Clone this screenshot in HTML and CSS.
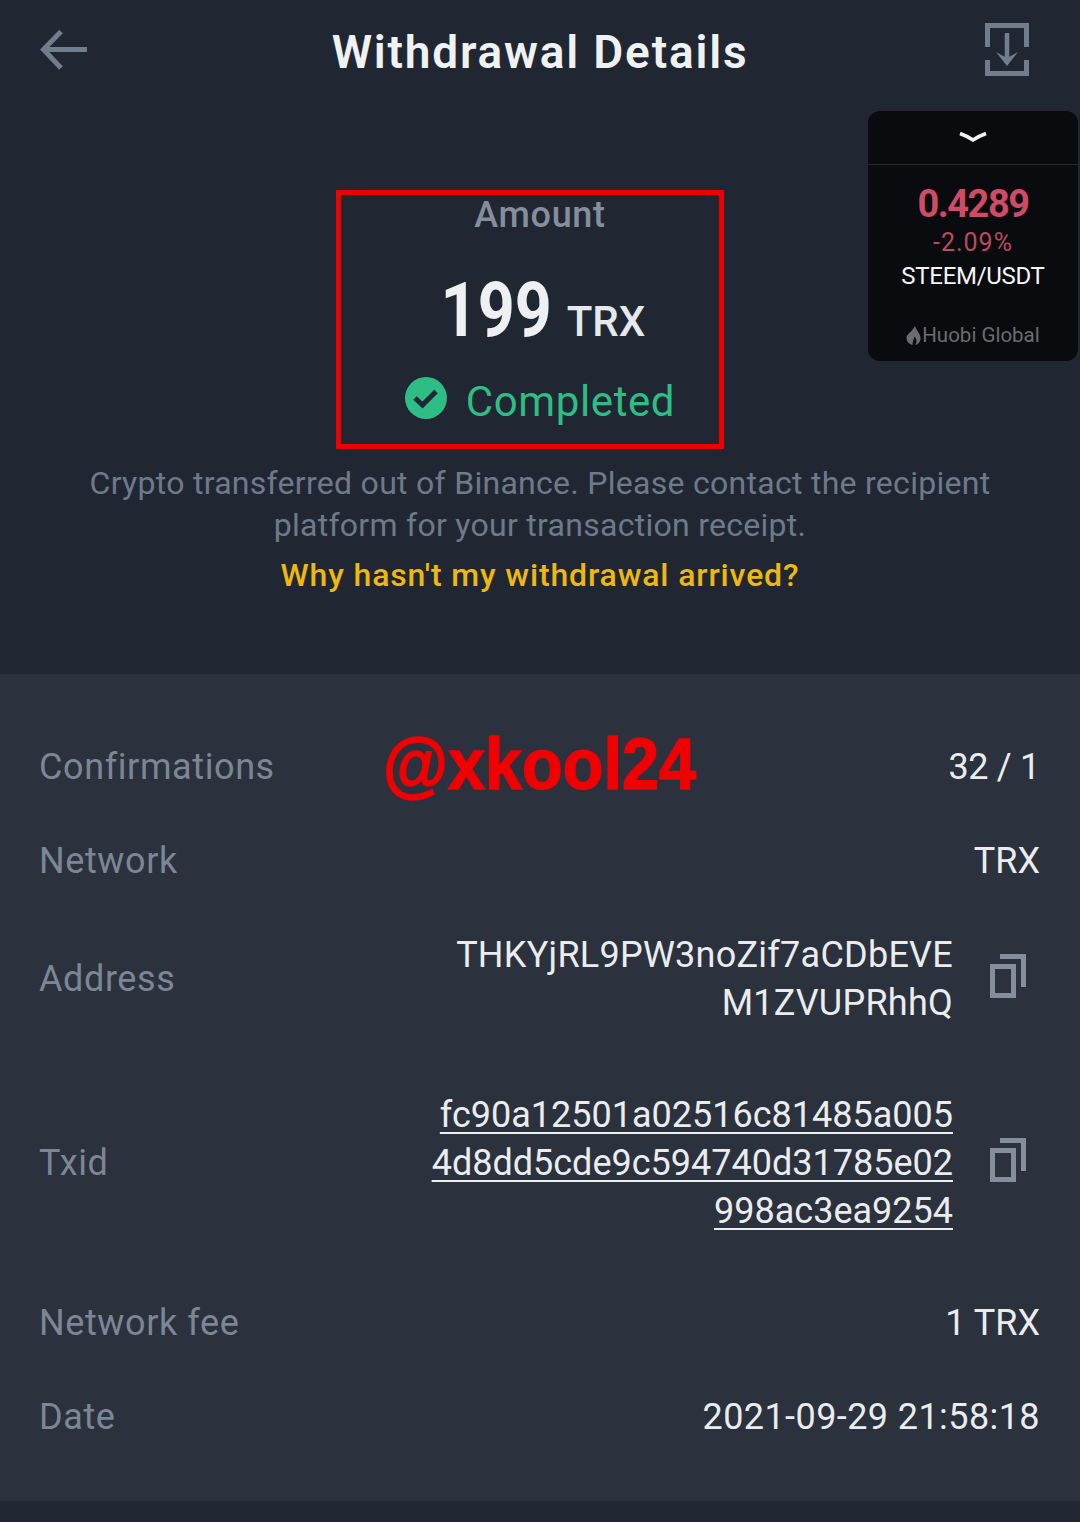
FILE: index.html
```html
<!DOCTYPE html>
<html lang="en">
<head>
<meta charset="utf-8">
<title>Withdrawal Details</title>
<link rel="stylesheet" href="styles.css">
</head>
<body>
<div class="page">
  <header class="topbar">
    <svg class="back-icon" width="48" height="40" viewBox="0 0 48 40"><path d="M47 19.500H4M21 1.500L3.500 19.500L21 38" fill="none" stroke="#717c8c" stroke-width="5"/></svg>
    <h1 class="title">Withdrawal Details</h1>
    <svg class="save-icon" width="44" height="53" viewBox="0 0 44 53"><path d="M2.500 24V2.500H41.500V24M2.500 37V50.500H41.500V37" fill="none" stroke="#717c8c" stroke-width="5"/><path d="M22 10V36" stroke="#717c8c" stroke-width="4.500"/><path d="M11 29L22 43L33 29L22 35Z" fill="#717c8c"/></svg>
  </header>

  <section class="hero">
    <div class="amount-label">Amount</div>
    <div class="amount"><span class="amount-num">199</span><span class="amount-unit">TRX</span></div>
    <div class="status">
      <svg class="status-icon" width="42" height="42" viewBox="0 0 42 42"><circle cx="21" cy="21" r="21" fill="#2ebd85"/><path d="M10 21L17.500 28L31 14.500" fill="none" stroke="#212833" stroke-width="5"/></svg>
      <span>Completed</span>
    </div>
    <p class="desc">Crypto transferred out of Binance. Please contact the recipient<br>platform for your transaction receipt.</p>
    <a class="help">Why hasn't my withdrawal arrived?</a>
    <div class="red-box"></div>
  </section>

  <aside class="ticker">
    <div class="ticker-top"><svg width="30" height="12" viewBox="0 0 30 12"><path d="M2 2.500Q9 5 15 9Q21 5 28 2.500" fill="none" stroke="#f2f2f2" stroke-width="3.500"/></svg></div>
    <div class="ticker-body">
      <div class="ticker-price">0.4289</div>
      <div class="ticker-change">-2.09%</div>
      <div class="ticker-pair">STEEM/USDT</div>
      <div class="ticker-brand"><svg width="15" height="19" viewBox="0 0 15 19"><path d="M9 0C10 4 14 7 14.500 11.500C15 15.500 12 18.500 9.500 19C11.500 15 10 12 8.500 10.500C8 13 7 14 6.500 19C3 18 0.500 15.500 0.500 12C0.500 8 6 6 9 0Z" fill="#6a6c70"/></svg><span>Huobi Global</span></div>
    </div>
  </aside>

  <section class="panel">
    <div class="watermark">@xkool24</div>
    <div class="row"><span class="label">Confirmations</span><span class="value value-conf">32 / 1</span></div>
    <div class="row"><span class="label">Network</span><span class="value">TRX</span></div>
    <div class="row row-multi">
      <span class="label">Address</span>
      <div class="value-group">
        <span class="value value-addr">THKYjRL9PW3noZif7aCDbEVE<br>M1ZVUPRhhQ</span>
        <svg class="copy" width="36" height="44" viewBox="0 0 36 44"><path d="M10 2.500H33.500V33" fill="none" stroke="#848e9c" stroke-width="5"/><rect x="2.500" y="12.500" width="21" height="29" fill="none" stroke="#848e9c" stroke-width="5"/></svg>
      </div>
    </div>
    <div class="row row-multi">
      <span class="label">Txid</span>
      <div class="value-group">
        <span class="value value-link">fc90a12501a02516c81485a005<br>4d8dd5cde9c594740d31785e02<br>998ac3ea9254</span>
        <svg class="copy" width="36" height="44" viewBox="0 0 36 44"><path d="M10 2.500H33.500V33" fill="none" stroke="#848e9c" stroke-width="5"/><rect x="2.500" y="12.500" width="21" height="29" fill="none" stroke="#848e9c" stroke-width="5"/></svg>
      </div>
    </div>
    <div class="row"><span class="label">Network fee</span><span class="value">1 TRX</span></div>
    <div class="row"><span class="label">Date</span><span class="value value-date">2021-09-29 21:58:18</span></div>
  </section>
</div>
</body>
</html>
```

FILE: styles.css
```css
* { box-sizing: border-box; }
html, body { margin: 0; padding: 0; }
body {
  background: #202732;
  color: #eaecef;
  font-family: "Roboto", "Noto Sans", sans-serif;
}
.page {
  position: relative;
  width: 1080px;
  height: 1522px;
  overflow: hidden;
  background: #202732;
}
.topbar {
  position: relative;
  height: 100px;
  display: flex;
  align-items: center;
  justify-content: space-between;
  padding: 0 51px 0 40px;
}
.back-icon { margin-bottom: 1px; }
.save-icon { margin-bottom: 2px; }
.title {
  position: absolute;
  left: 0;
  right: 0;
  top: 22px;
  margin: 0;
  text-align: center;
  font-size: 46px;
  line-height: 60px;
  font-weight: 600;
  letter-spacing: 1.800px;
  color: #f0f1f3;
}
.hero {
  position: relative;
  height: 574px;
  padding-top: 93px;
  display: flex;
  flex-direction: column;
  align-items: center;
}
.amount-label {
  font-size: 36px;
  line-height: 44px;
  font-weight: 500;
  color: #848e9c;
  letter-spacing: 0.7px;
}
.amount {
  display: flex;
  align-items: baseline;
  gap: 15px;
  margin-top: 33px;
  line-height: 80px;
  height: 80px;
}
.amount-num {
  display: inline-block;
  margin-left: -14px;
  font-size: 76px;
  font-weight: 700;
  color: #eef0f3;
  transform: scaleX(0.85);
  transform-origin: right center;
}
.amount-unit { font-size: 42px; font-weight: 500; color: #e6e8ec; }
.status {
  display: flex;
  align-items: center;
  gap: 19px;
  margin-top: 27px;
  height: 48px;
  font-size: 42px;
  color: #2ebd85;
  letter-spacing: 0.6px;
}
.status-icon { margin-bottom: 6px; }
.desc {
  margin: 37px 0 0;
  text-align: center;
  font-size: 32px;
  line-height: 42px;
  color: #6e7a8a;
  letter-spacing: 0.28px;
}
.help {
  margin-top: 8px;
  font-size: 32px;
  line-height: 42px;
  font-weight: 500;
  letter-spacing: 0.85px;
  color: #edb80f;
}
.red-box {
  position: absolute;
  left: 336px;
  top: 90px;
  width: 388px;
  height: 259px;
  border: 5px solid #ec0000;
}
.ticker {
  position: absolute;
  left: 868px;
  top: 111px;
  width: 210px;
  height: 250px;
  border-radius: 12px;
  background: #0a0b0e;
}
.ticker-top {
  height: 54px;
  display: flex;
  align-items: center;
  justify-content: center;
  border-bottom: 1px solid #26282c;
  padding-bottom: 2px;
}
.ticker-body {
  display: flex;
  flex-direction: column;
  align-items: center;
  padding-top: 15px;
}
.ticker-price { font-size: 38px; line-height: 48px; font-weight: 700; letter-spacing: -1.500px; color: #cf4c66; }
.ticker-change { font-size: 25px; line-height: 30px; letter-spacing: 1px; color: #bb4a60; }
.ticker-pair { font-size: 24px; line-height: 36px; letter-spacing: -0.300px; color: #f5f5f5; }
.ticker-brand {
  display: flex;
  align-items: center;
  gap: 1px;
  margin-top: 28px;
  font-size: 20.500px;
  line-height: 26px;
  color: #6a6c70;
}
.panel {
  position: relative;
  height: 827px;
  padding: 46px 40px 0;
  background: #2b323d;
}
.row {
  display: flex;
  align-items: center;
  justify-content: space-between;
  padding: 23px 0;
}
.row-multi { margin-bottom: 18px; }
.label {
  font-size: 36px;
  line-height: 48px;
  letter-spacing: 0.6px;
  color: #7c8695;
  margin-left: -1px;
}
.value {
  font-size: 36px;
  line-height: 48px;
  color: #eaecef;
  text-align: right;
}
.value-conf { letter-spacing: -0.300px; }
.value-addr { letter-spacing: 0.25px; }
.value-date { letter-spacing: 0.42px; }
.value-group {
  display: flex;
  align-items: center;
  gap: 37px;
}
.value-link { text-decoration: underline; text-underline-offset: 5px; text-decoration-thickness: 2px; }
.copy { margin-right: 14px; margin-bottom: 6px; }
.watermark {
  position: absolute;
  left: 383px;
  top: 48px;
  font-family: "Liberation Sans", Arial, sans-serif;
  font-size: 72px;
  line-height: 84px;
  font-weight: 700;
  color: #f00000;
  -webkit-text-stroke: 1.500px #f00000;
  transform: scaleX(0.925);
  transform-origin: left center;
}
```
